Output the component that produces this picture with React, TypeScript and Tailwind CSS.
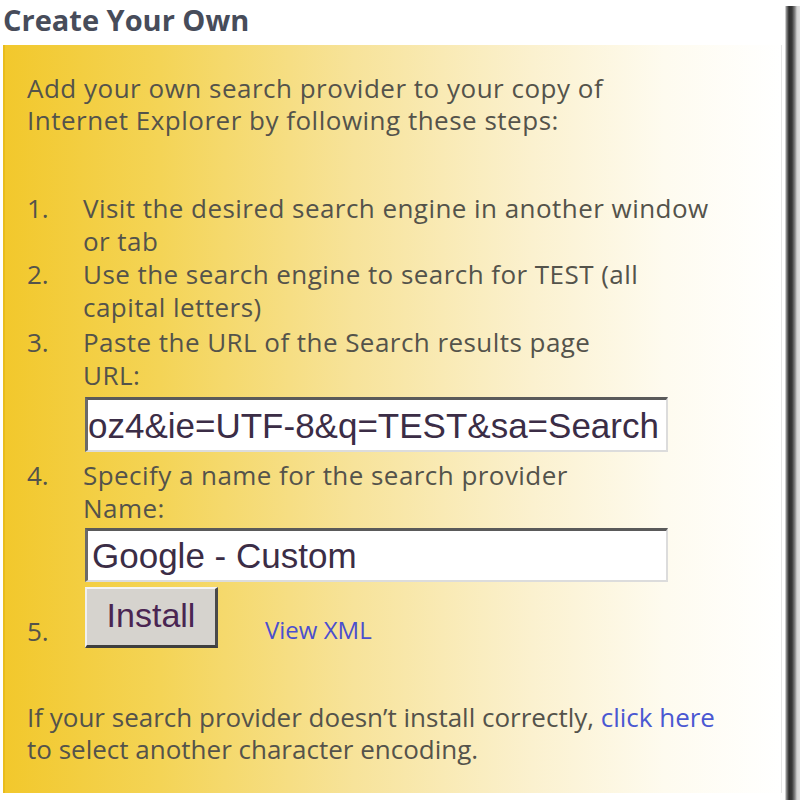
import React from "react";

const body = "font-['Open_Sans',sans-serif]";

function Num({ n }: { n: string }) {
  return <div className="w-[56px] shrink-0 tracking-normal">{n}</div>;
}

export default function App() {
  return (
    <div className={`w-[800px] h-[800px] bg-white flex overflow-hidden ${body}`}>
      <div className="w-[782px] flex flex-col">
        <div className="h-[45px] pl-[3px] pt-[2px] text-[29px] leading-[36px] font-bold text-[#474c5a]">
          Create Your Own
        </div>
        <div className="ml-[3px] h-[748px] border-l-2 border-[#e9bc1c] border-r border-r-[#e6e6e6] bg-[linear-gradient(to_right,#f2c82c_0%,#f4d456_20%,#f7e39a_45%,#fbf1cf_68%,#fefbef_85%,#ffffff_100%)] pl-[22px] pt-[27px] text-[26px] text-[#54534b]">
          <div className="leading-[32px] tracking-[0.5px]">
            <div>Add your own search provider to your copy of</div>
            <div>Internet Explorer by following these steps:</div>
          </div>
          <div className="mt-[56px] leading-[33px] tracking-[0.45px]">
            <div className="flex">
              <Num n="1." />
              <div>
                <div>Visit the desired search engine in another window</div>
                <div>or tab</div>
              </div>
            </div>
            <div className="flex">
              <Num n="2." />
              <div>
                <div>Use the search engine to search for TEST (all</div>
                <div>capital letters)</div>
              </div>
            </div>
            <div className="flex mt-[2px]">
              <Num n="3." />
              <div>
                <div>Paste the URL of the Search results page</div>
                <div>URL:</div>
                <div className="mt-[5px] ml-[2px] w-[583px] h-[55px] bg-white border-t-[3px] border-l-[3px] border-t-[#5a5a5a] border-l-[#6a6a6a] border-b-2 border-r-2 border-b-[#dcdcdc] border-r-[#dcdcdc] overflow-hidden flex items-center tracking-normal">
                  <span className="font-['Liberation_Sans',sans-serif] text-[35px] leading-none text-[#3b2d46] whitespace-nowrap">
                    oz4&amp;ie=UTF-8&amp;q=TEST&amp;sa=Search
                  </span>
                </div>
              </div>
            </div>
            <div className="flex mt-[7px]">
              <Num n="4." />
              <div>
                <div>Specify a name for the search provider</div>
                <div>Name:</div>
                <div className="mt-[3px] ml-[2px] w-[583px] h-[54px] bg-white border-t-[3px] border-l-[3px] border-t-[#5a5a5a] border-l-[#6a6a6a] border-b-2 border-r-2 border-b-[#dcdcdc] border-r-[#dcdcdc] overflow-hidden flex items-center pl-[4px] tracking-normal">
                  <span className="font-['Liberation_Sans',sans-serif] text-[35px] leading-none text-[#3b2d46] whitespace-nowrap">
                    Google - Custom
                  </span>
                </div>
              </div>
            </div>
            <div className="flex items-end mt-[5px] tracking-normal">
              <Num n="5." />
              <div className="ml-[2px] w-[133px] h-[61px] bg-[#d6d3ce] border-t-2 border-l-2 border-t-[#f4f4f4] border-l-[#f0f0f0] border-b-[3px] border-r-[3px] border-b-[#3e3e3e] border-r-[#4a4a4a] flex items-center justify-center pb-[4px]">
                <span className="font-['Liberation_Sans',sans-serif] text-[34px] leading-none text-[#4a2552]">
                  Install
                </span>
              </div>
              <div className="ml-[47px] text-[24px] text-[#4b4fcf] leading-[33px] pb-[2px]">View XML</div>
            </div>
          </div>
          <div className="mt-[53px] leading-[32px]">
            <div>
              If your search provider doesn’t install correctly,{" "}
              <span className="text-[#4a58d2]">click here</span>
            </div>
            <div>to select another character encoding.</div>
          </div>
        </div>
      </div>
      <div className="mt-[6px] w-[18px] h-[794px] bg-[linear-gradient(to_right,#ffffff_0px,#ffffff_3px,#9a9a9a_4px,#2e2e2e_7px,#3a3a3a_10px,#8a8a8a_13px,#d4d4d4_15px,#e0e0e0_18px)]" />
    </div>
  );
}
